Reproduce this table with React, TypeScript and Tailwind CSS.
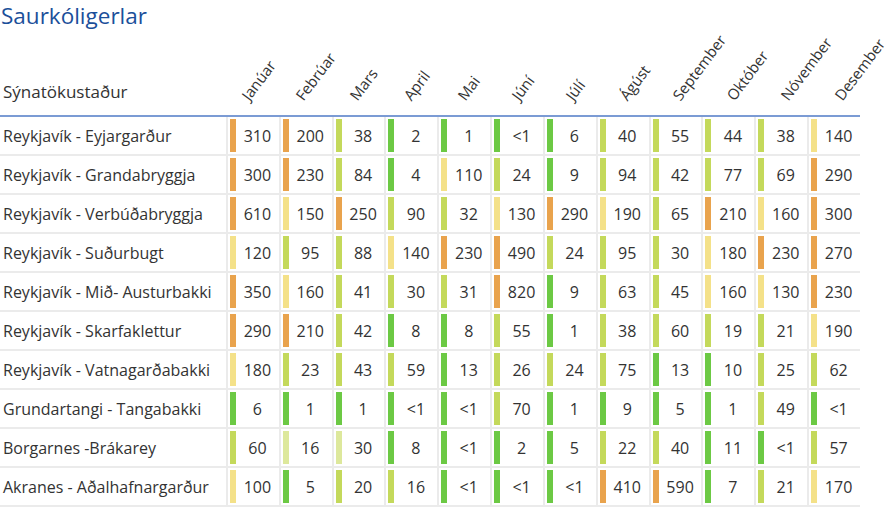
import React from 'react';

const months = [
  'Janúar', 'Febrúar', 'Mars', 'April', 'Mai', 'Júní',
  'Júlí', 'Ágúst', 'September', 'Október', 'Nóvember', 'Desember',
];

// O = orange, Y = yellow, L = lime, P = pale lime, G = green
const barColor: Record<string, string> = {
  O: 'bg-[#e9a34d]',
  Y: 'bg-[#f4e189]',
  L: 'bg-[#c4d95b]',
  P: 'bg-[#dde89c]',
  G: 'bg-[#6cc944]',
};

type Row = { place: string; values: [string, string][] };

const parse = (s: string): [string, string][] =>
  s.split(' ').map((t) => {
    const [v, c] = t.split(':');
    return [v, c];
  });

const rows: Row[] = [
  { place: 'Reykjavík - Eyjargarður', values: parse('310:O 200:O 38:L 2:G 1:G <1:G 6:G 40:L 55:L 44:L 38:L 140:Y') },
  { place: 'Reykjavík - Grandabryggja', values: parse('300:O 230:O 84:L 4:G 110:Y 24:L 9:G 94:L 42:L 77:L 69:L 290:O') },
  { place: 'Reykjavík - Verbúðabryggja', values: parse('610:O 150:Y 250:O 90:L 32:L 130:Y 290:O 190:Y 65:L 210:O 160:Y 300:O') },
  { place: 'Reykjavík - Suðurbugt', values: parse('120:Y 95:L 88:L 140:Y 230:O 490:O 24:L 95:L 30:L 180:Y 230:O 270:O') },
  { place: 'Reykjavík - Mið- Austurbakki', values: parse('350:O 160:Y 41:L 30:L 31:L 820:O 9:G 63:L 45:L 160:Y 130:Y 230:O') },
  { place: 'Reykjavík - Skarfaklettur', values: parse('290:O 210:O 42:L 8:G 8:G 55:L 1:G 38:L 60:L 19:L 21:L 190:Y') },
  { place: 'Reykjavík - Vatnagarðabakki', values: parse('180:Y 23:L 43:L 59:L 13:G 26:L 24:L 75:L 13:G 10:G 25:L 62:L') },
  { place: 'Grundartangi - Tangabakki', values: parse('6:G 1:G 1:G <1:G <1:G 70:L 1:G 9:G 5:G 1:G 49:L <1:G') },
  { place: 'Borgarnes -Brákarey', values: parse('60:L 16:P 30:P 8:G <1:G 2:G 5:G 22:L 40:L 11:G <1:G 57:L') },
  { place: 'Akranes - Aðalhafnargarður', values: parse('100:Y 5:G 20:L 16:L <1:G <1:G <1:G 410:O 590:O 7:G 21:L 170:Y') },
];

export default function App() {
  return (
    <div className="w-[894px] h-[507px] overflow-hidden bg-white text-[#333] font-['Open_Sans',sans-serif]">
      <h1 className="text-[22.5px] leading-[30px] text-[#1b4f9a] pl-px pt-[1px]">Saurkóligerlar</h1>

      <div className="w-[860px]">
        {/* Header */}
        <div className="grid grid-cols-[226px_repeat(12,minmax(0,1fr))] h-[86px] border-b-2 border-[#7b9bd4]">
          <div className="flex items-end pl-[3px] pb-[15px] text-[17px] leading-none">Sýnatökustaður</div>
          {months.map((m, i) => (
            <div key={m} className="flex items-end pb-[12px]">
              <span
                className="inline-block whitespace-nowrap text-[15px] leading-none origin-bottom-left -rotate-[53deg]"
                style={{ marginLeft: 25 + i * 1.1 }}
              >
                {m}
              </span>
            </div>
          ))}
        </div>

        {/* Body */}
        {rows.map((r) => (
          <div
            key={r.place}
            className="grid grid-cols-[226px_repeat(12,minmax(0,1fr))] h-[39px] border-b-2 border-[#ebebeb]"
          >
            <div className="flex items-center pl-[3px] text-[16px] whitespace-nowrap">{r.place}</div>
            {r.values.map(([v, c], i) => (
              <div key={i} className="flex border-l-2 border-[#ebebeb] pl-[2px] pt-[2px] pb-[2px]">
                <div className={`w-[6px] h-[33px] ${barColor[c]}`} />
                <div className="flex-1 flex items-center justify-center text-[16px]">{v}</div>
              </div>
            ))}
          </div>
        ))}
      </div>
    </div>
  );
}
